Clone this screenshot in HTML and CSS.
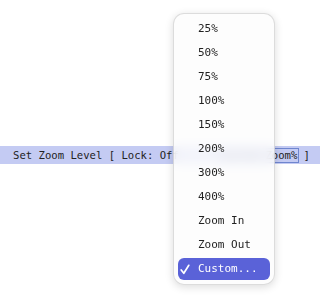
FILE: index.html
```html
<!DOCTYPE html>
<html>
<head>
<meta charset="utf-8">
<link rel="stylesheet" href="styles.css">
</head>
<body>
<div class="page">
  <div class="bar">
    <span class="label">Set Zoom Level [ Lock: Off</span>
    <span class="sel">Custom Zoom%</span>
    <span class="close">]</span>
  </div>
</div>
<div class="menu">
  <div class="item">25%</div>
  <div class="item">50%</div>
  <div class="item">75%</div>
  <div class="item">100%</div>
  <div class="item">150%</div>
  <div class="item">200%</div>
  <div class="item">300%</div>
  <div class="item">400%</div>
  <div class="item">Zoom In</div>
  <div class="item">Zoom Out</div>
  <div class="item active"><svg class="check" width="10" height="11" viewBox="0 0 10 11"><path d="M1.2 6 L3.8 9.3 L8.8 1.3" fill="none" stroke="#fff" stroke-width="1.7" stroke-linecap="round" stroke-linejoin="round"/></svg>Custom...</div>
</div>
</body>
</html>
```
FILE: styles.css
```css
html, body {
  margin: 0;
  padding: 0;
  background: #fff;
}
.page {
  padding-top: 146px;
  width: 323px;
  height: 298px;
  box-sizing: border-box;
}
.bar {
  height: 18px;
  width: 320px;
  background: #c4cbf3;
  display: flex;
  align-items: center;
  padding-left: 13px;
  box-sizing: border-box;
  font-family: "DejaVu Sans Mono", monospace;
  font-size: 10.6px;
  color: #222;
  white-space: pre;
}
.sel {
  margin-left: 40px;
  border: 1px solid #6f86cf;
  padding: 0 1px;
  line-height: 13px;
}
.close {
  margin-left: 4px;
}
.menu {
  position: absolute;
  left: 173px;
  top: 13px;
  width: 102px;
  height: 272px;
  box-sizing: border-box;
  padding: 4px 4px 5px;
  display: flex;
  flex-direction: column;
  gap: 2px;
  background: rgba(252, 252, 252, 0.82);
  backdrop-filter: blur(6px);
  border: 1px solid rgba(0, 0, 0, 0.13);
  border-radius: 11px;
  box-shadow: 0 2px 8px rgba(0, 0, 0, 0.14);
  font-family: "DejaVu Sans Mono", monospace;
  font-size: 11px;
  color: #222;
}
.item {
  height: 22px;
  line-height: 22px;
  padding-left: 20px;
  border-radius: 6px;
  position: relative;
}
.item.active {
  background: #5a62d8;
  color: #fff;
}
.check {
  position: absolute;
  left: 2px;
  top: 6px;
}
```
